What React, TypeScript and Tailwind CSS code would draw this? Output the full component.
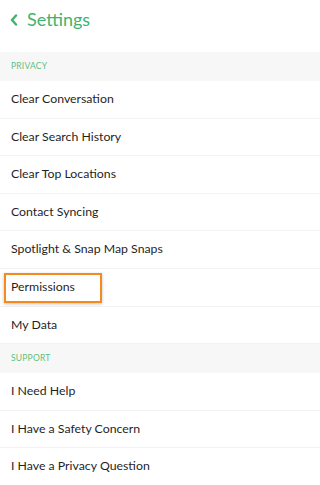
import { FC } from "react";

type Row = { label: string; highlight?: boolean };

const privacy: Row[] = [
  { label: "Clear Conversation" },
  { label: "Clear Search History" },
  { label: "Clear Top Locations" },
  { label: "Contact Syncing" },
  { label: "Spotlight & Snap Map Snaps" },
  { label: "Permissions", highlight: true },
  { label: "My Data" },
];

const support: Row[] = [
  { label: "I Need Help" },
  { label: "I Have a Safety Concern" },
  { label: "I Have a Privacy Question" },
];

const SectionHeader: FC<{ title: string }> = ({ title }) => (
  <div className="flex h-[29px] items-center bg-[#f7f7f7] px-[11px] text-[8.5px] tracking-wide text-[#5fbf80]">
    {title}
  </div>
);

const Item: FC<{ row: Row }> = ({ row }) => (
  <div className="relative flex h-[37.6px] items-center border-b border-[#f2f2f2] px-[11px] text-[12.3px] text-[#1f1f1f]">
    {row.highlight && (
      <div className="absolute left-[4px] top-[4px] h-[30px] w-[98px] border-2 border-[#f58a1f] shadow-[0_1px_3px_rgba(0,0,0,0.25)]" />
    )}
    <span className="relative">{row.label}</span>
  </div>
);

export default function App() {
  return (
    <div className="h-[485px] w-full overflow-hidden bg-white font-['Lato','Liberation_Sans',sans-serif]">
      <div className="flex h-[52px] items-start gap-[9px] px-[10px] pt-[7px] text-[#3fb36e]">
        <svg width="8" height="12" viewBox="0 0 8 12" className="mt-[7px]">
          <path d="M6 1.5L2 6l4 4.5" fill="none" stroke="currentColor" strokeWidth="2.4" strokeLinecap="round" strokeLinejoin="round" />
        </svg>
        <span className="text-[18px] leading-[24px]">Settings</span>
      </div>
      <SectionHeader title="PRIVACY" />
      {privacy.map((r) => (
        <Item key={r.label} row={r} />
      ))}
      <SectionHeader title="SUPPORT" />
      {support.map((r) => (
        <Item key={r.label} row={r} />
      ))}
    </div>
  );
}
